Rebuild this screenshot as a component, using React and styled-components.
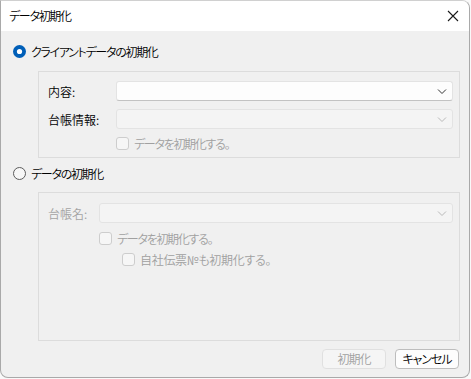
import React from 'react';
import styled, { createGlobalStyle } from 'styled-components';

const GlobalStyle = createGlobalStyle`
  html, body {
    margin: 0;
    padding: 0;
    background: #f9f9f9;
  }
  body {
    font-family: "Noto Sans CJK JP", "Noto Sans", sans-serif;
    font-size: 12px;
    font-weight: 350;
    font-feature-settings: "palt";
    letter-spacing: -1.3px;
    color: #000;
  }
`;

const Window = styled.div`
  width: 470px;
  height: 378px;
  box-sizing: border-box;
  border: 1px solid #a9a9a9;
  border-top-color: #d0d0d0;
  border-radius: 0 8px 8px 8px;
  background: #f0f0f0;
  overflow: hidden;
  display: flex;
  flex-direction: column;
`;

const TitleBar = styled.div`
  height: 30px;
  background: #fff;
  display: flex;
  align-items: center;
  justify-content: space-between;
  padding: 0 10px 0 8px;
  flex-shrink: 0;
`;

const Title = styled.span`
  font-size: 12px;
  line-height: 1;
`;

const Body = styled.div`
  flex: 1;
  display: flex;
  flex-direction: column;
  padding: 10px 9px 0 12px;
`;

const RadioRow = styled.label`
  display: flex;
  align-items: center;
  gap: 5px;
  height: 20px;
  margin-top: ${p => p.$top || 0}px;
`;

const Group = styled.div`
  margin-left: 25px;
  margin-top: ${p => p.$top || 0}px;
  border: 1px solid #dcdcdc;
  padding: ${p => p.$padTop}px 6px 0 9px;
  height: ${p => p.$height}px;
  box-sizing: border-box;
  display: flex;
  flex-direction: column;
`;

const FieldRow = styled.div`
  display: flex;
  align-items: center;
  height: 20px;
  margin-top: ${p => p.$top || 0}px;
`;

const Label = styled.span`
  width: ${p => p.$width}px;
  flex-shrink: 0;
  letter-spacing: 0;
  color: ${p => (p.$disabled ? '#a3a3a3' : '#000')};
`;

const Combo = styled.div`
  flex: 1;
  height: 20px;
  box-sizing: border-box;
  border: 1px solid #e3e3e3;
  border-bottom-color: ${p => (p.$disabled ? '#e3e3e3' : '#c2c2c2')};
  border-radius: 3px;
  background: ${p => (p.$disabled ? '#f4f4f4' : '#fdfdfd')};
  display: flex;
  align-items: center;
  justify-content: flex-end;
  padding-right: 3px;
`;

const CheckRow = styled.label`
  display: flex;
  align-items: center;
  gap: 5px;
  height: 16px;
  margin-left: ${p => p.$indent}px;
  margin-top: ${p => p.$top || 0}px;
  color: #a0a0a0;
`;

const CheckText = styled.span`
  letter-spacing: ${p => p.$spacing ?? -1.3}px;
`;

const CheckBox = styled.span`
  width: 13px;
  height: 13px;
  box-sizing: border-box;
  border: 1px solid #cdcdcd;
  border-radius: 3px;
  background: #f6f6f6;
  flex-shrink: 0;
`;

const Footer = styled.div`
  display: flex;
  justify-content: flex-end;
  gap: 9px;
  padding: 8px 1px 0 0;
`;

const Button = styled.button`
  width: 64px;
  height: 20px;
  box-sizing: border-box;
  padding: 0;
  font-family: inherit;
  font-size: 12px;
  font-weight: 350;
  font-feature-settings: "palt";
  letter-spacing: -1px;
  border-radius: 4px;
  border: 1px solid ${p => (p.disabled ? '#e0e0e0' : '#bdbdbd')};
  background: ${p => (p.disabled ? '#f5f5f5' : '#fdfdfd')};
  color: ${p => (p.disabled ? '#a0a0a0' : '#000')};
  line-height: 1;
`;

const Chevron = ({ disabled }) => (
  <svg width="14" height="10" viewBox="0 0 14 10">
    <path d="M3 3.5 L7 7.5 L11 3.5" fill="none" stroke={disabled ? '#b9b9b9' : '#333'} strokeWidth="1" />
  </svg>
);

const Radio = ({ checked }) => (
  <svg width="13" height="13" viewBox="0 0 13 13">
    {checked ? (
      <>
        <circle cx="6.5" cy="6.5" r="6.5" fill="#005fb8" />
        <circle cx="6.5" cy="6.5" r="2.6" fill="#fff" />
      </>
    ) : (
      <circle cx="6.5" cy="6.5" r="6" fill="#f7f7f7" stroke="#5c5c5c" strokeWidth="1" />
    )}
  </svg>
);

const CloseIcon = () => (
  <svg width="12" height="12" viewBox="0 0 12 12">
    <path d="M1 1 L11 11 M11 1 L1 11" stroke="#1a1a1a" strokeWidth="1.1" />
  </svg>
);

const App = () => (
  <>
    <GlobalStyle />
    <Window>
      <TitleBar>
        <Title>データ初期化</Title>
        <CloseIcon />
      </TitleBar>
      <Body>
        <RadioRow>
          <Radio checked />
          <span>クライアントデータの初期化</span>
        </RadioRow>
        <Group $top={10} $padTop={9} $height={87}>
          <FieldRow>
            <Label $width={68}>内容:</Label>
            <Combo>
              <Chevron />
            </Combo>
          </FieldRow>
          <FieldRow $top={8}>
            <Label $width={68}>台帳情報:</Label>
            <Combo $disabled>
              <Chevron disabled />
            </Combo>
          </FieldRow>
          <CheckRow $indent={68} $top={6}>
            <CheckBox />
            <CheckText>データを初期化する。</CheckText>
          </CheckRow>
        </Group>
        <RadioRow $top={5}>
          <Radio />
          <span>データの初期化</span>
        </RadioRow>
        <Group $top={9} $padTop={10} $height={149}>
          <FieldRow>
            <Label $width={51} $disabled>台帳名:</Label>
            <Combo $disabled>
              <Chevron disabled />
            </Combo>
          </FieldRow>
          <CheckRow $indent={51} $top={7}>
            <CheckBox />
            <CheckText>データを初期化する。</CheckText>
          </CheckRow>
          <CheckRow $indent={74} $top={5}>
            <CheckBox />
            <CheckText $spacing={-0.3}>自社伝票№も初期化する。</CheckText>
          </CheckRow>
        </Group>
        <Footer>
          <Button disabled>初期化</Button>
          <Button>キャンセル</Button>
        </Footer>
      </Body>
    </Window>
  </>
);

export default App;
